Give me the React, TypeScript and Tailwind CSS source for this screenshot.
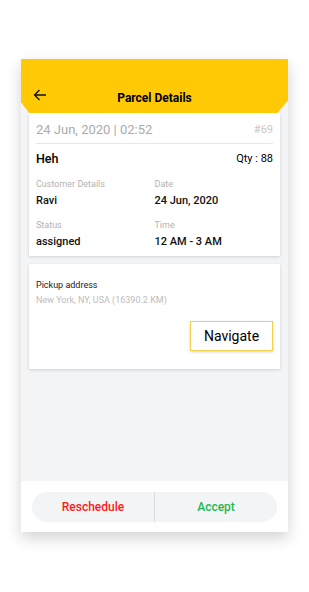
import React from "react";

const Info = ({ label, value }: { label: string; value: string }) => (
  <div className="flex flex-col">
    <p className="text-[9px] leading-[12px] text-[#b3b3b3]">{label}</p>
    <p className="text-[11px] leading-[14px] font-medium text-[#111] mt-[4px]">{value}</p>
  </div>
);

const App = () => {
  return (
    <div className="w-[309px] h-[592px] bg-white pt-[59px] pl-[21px] font-['Roboto',sans-serif]">
      <div className="w-[267px] h-[473px] flex flex-col bg-[#f3f4f6] shadow-[0_6px_14px_rgba(0,0,0,0.18)]">
        <div className="h-[54px] bg-[#ffca05] flex items-end px-[12px] pb-[6px] [clip-path:polygon(0_0,100%_0,100%_77%,96%_100%,3%_100%,0_80%)]">
          <svg width="14" height="12" viewBox="0 0 14 12" className="mb-[6px]">
            <path d="M13 6H1.5M6.5 1L1.5 6l5 5" fill="none" stroke="#111" strokeWidth="1.3" />
          </svg>
          <h1 className="flex-1 text-center text-[12px] leading-[18px] font-bold text-black pr-[14px]">Parcel Details</h1>
        </div>
        <div className="flex-1 px-[8px] pb-[8px]">
          <div className="bg-white shadow-[0_1px_3px_rgba(0,0,0,0.15)] px-[7px] pb-[7px]">
            <div className="flex justify-between items-center pt-[11px] pb-[7px] border-b border-[#e6e6e6]">
              <p className="text-[13px] leading-[12px] text-[#ababab]">24 Jun, 2020 | 02:52</p>
              <p className="text-[11px] leading-[12px] text-[#c8c8c8]">#69</p>
            </div>
            <div className="flex justify-between items-center mt-[8px]">
              <p className="text-[12.5px] leading-[14px] font-medium text-black">Heh</p>
              <p className="text-[11px] leading-[14px] text-black">Qty : 88</p>
            </div>
            <div className="grid grid-cols-2 mt-[12px] gap-y-[11px]">
              <Info label="Customer Details" value="Ravi" />
              <Info label="Date" value="24 Jun, 2020" />
              <Info label="Status" value="assigned" />
              <Info label="Time" value="12 AM - 3 AM" />
            </div>
          </div>
          <div className="bg-white shadow-[0_1px_3px_rgba(0,0,0,0.15)] mt-[8px] h-[105px] px-[7px] pt-[15px] flex flex-col">
            <p className="text-[9px] leading-[12px] text-[#222]">Pickup address</p>
            <p className="text-[9px] leading-[12px] text-[#bdbdbd] mt-[3px]">New York, NY, USA (16390.2 KM)</p>
            <div className="flex justify-end mt-[15px]">
              <button className="w-[83px] h-[30px] border border-[#f2d24a] bg-white shadow-[0_1px_3px_rgba(0,0,0,0.18)] text-[14px] text-black">
                Navigate
              </button>
            </div>
          </div>
        </div>
        <div className="h-[51px] bg-white flex items-center px-[11px]">
          <div className="flex-1 h-[30px] rounded-full bg-[#f3f4f6] flex">
            <button className="flex-1 text-[12px] font-medium text-[#ff1a1a] border-r border-[#dcdcdc]">Reschedule</button>
            <button className="flex-1 text-[12px] font-medium text-[#1db954]">Accept</button>
          </div>
        </div>
      </div>
    </div>
  );
};

export default App;
